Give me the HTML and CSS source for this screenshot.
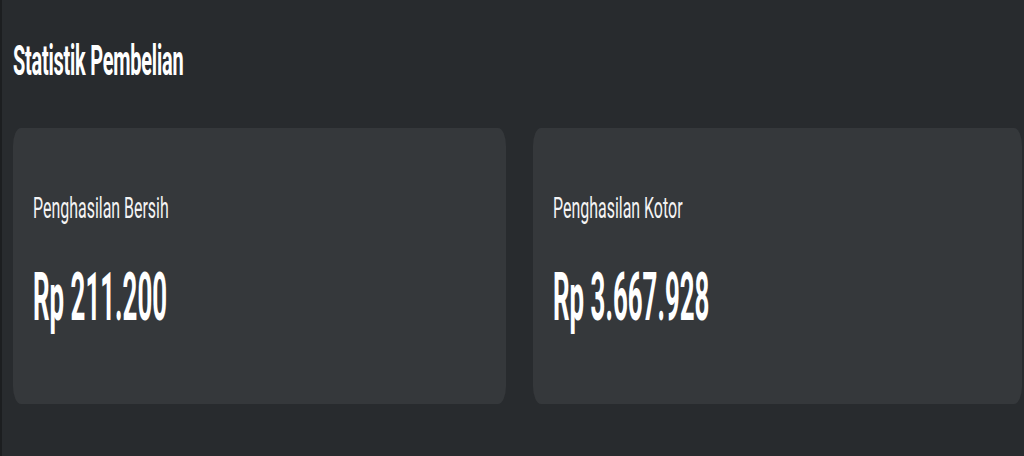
FILE: index.html
```html
<!DOCTYPE html>
<html lang="id">
<head>
<meta charset="utf-8">
<title>Statistik Pembelian</title>
<link rel="stylesheet" href="styles.css">
</head>
<body>
<main class="page">
  <h1 class="title"><span class="sq sq-title">Statistik Pembelian</span></h1>
  <section class="cards">
    <div class="card">
      <div class="label"><span class="sq sq-label">Penghasilan Bersih</span></div>
      <div class="value"><span class="sq sq-value">Rp 211.200</span></div>
    </div>
    <div class="card">
      <div class="label"><span class="sq sq-label">Penghasilan Kotor</span></div>
      <div class="value"><span class="sq sq-value">Rp 3.667.928</span></div>
    </div>
  </section>
</main>
</body>
</html>
```

FILE: styles.css
```css
html, body {
  margin: 0;
  padding: 0;
  height: 100%;
}

body {
  background: #282b2e;
  font-family: Roboto, "Noto Sans", "Liberation Sans", sans-serif;
  color: #ffffff;
}

.page {
  box-sizing: border-box;
  min-height: 100%;
  border-left: 2px solid #1c1e20;
  padding: 40px 2px 0 11px;
}

.sq {
  display: inline-block;
  white-space: nowrap;
  transform-origin: left center;
}

.title {
  margin: 0 0 46px 0;
  font-size: 42px;
  line-height: 42px;
  font-weight: 700;
  letter-spacing: -0.5px;
}

.sq-title {
  transform: scaleX(0.475);
}

.cards {
  display: grid;
  grid-template-columns: 493px 1fr;
  column-gap: 27px;
}

.card {
  background: #35383b;
  border-radius: 8px / 18px;
  padding: 66px 20px 73px;
}

.label {
  font-size: 29px;
  line-height: 29px;
  font-weight: 400;
  color: #f4f4f4;
}

.sq-label {
  transform: scaleX(0.55);
}

.value {
  margin-top: 41px;
  font-size: 67px;
  line-height: 67px;
  font-weight: 700;
}

.sq-value {
  transform: scaleX(0.386);
}
```
